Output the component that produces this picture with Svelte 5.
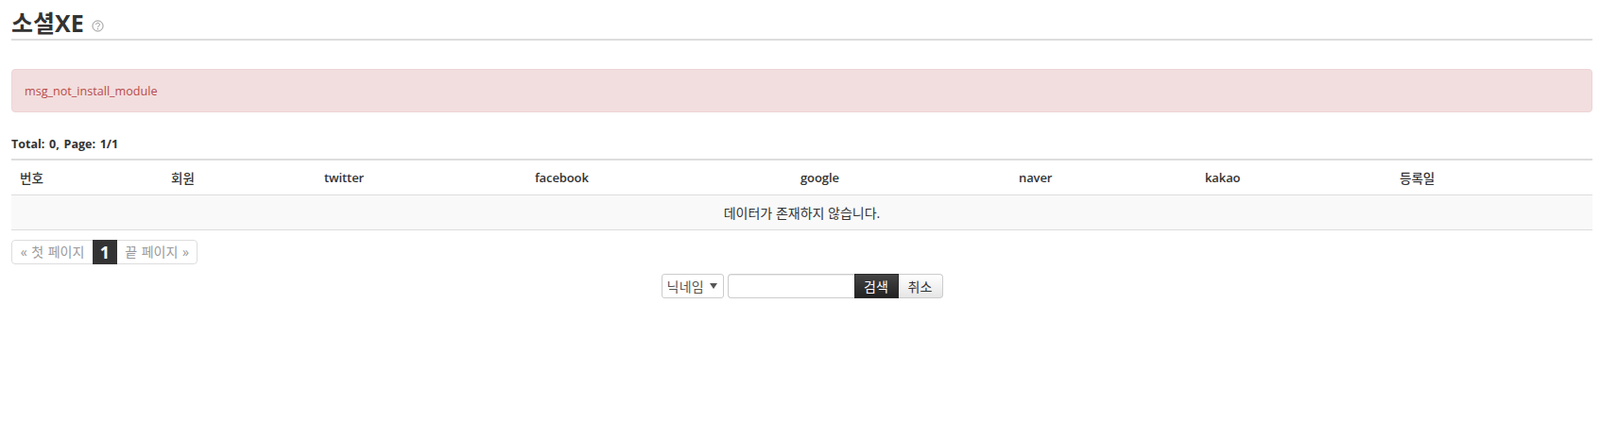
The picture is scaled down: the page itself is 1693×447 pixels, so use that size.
<script>
  const cols = ['번호', '회원', 'twitter', 'facebook', 'google', 'naver', 'kakao', '등록일'];
</script>

<div class="page">
  <h1 class="title">소셜XE <span class="help"><svg viewBox="0 0 14 14" width="13" height="13"><circle cx="7" cy="7" r="6" fill="none" stroke="#8a8a8a" stroke-width="1"/><path d="M5 5.6a2 2 0 1 1 3.1 1.6c-.7.5-1.1.8-1.1 1.6" fill="none" stroke="#8a8a8a" stroke-width="1"/><circle cx="7" cy="10.4" r=".7" fill="#8a8a8a"/></svg></span></h1>
  <div class="alert">msg_not_install_module</div>
  <div class="total"><strong>Total: 0, Page: 1/1</strong></div>
  <table>
    <thead>
      <tr>
        {#each cols as c}<th>{c}</th>{/each}
      </tr>
    </thead>
    <tbody>
      <tr><td colspan="8">데이터가 존재하지 않습니다.</td></tr>
    </tbody>
  </table>
  <div class="pager">
    <a href="#first">« 첫 페이지</a><strong>1</strong><a href="#last">끝 페이지 »</a>
  </div>
  <form class="search">
    <span class="select"><select><option>닉네임</option></select></span>
    <span class="group"><input type="text" /><button class="dark" type="button">검색</button><button class="light" type="button">취소</button></span>
  </form>
</div>

<style>
  :global(body) {
    margin: 0;
    background: #fff;
    color: #333;
    font-family: "Open Sans", "Noto Sans CJK KR", sans-serif;
    font-size: 13px;
  }
  .page { padding: 0 8px 0 12px; }
  .title {
    margin: 0;
    height: 41px;
    border-bottom: 2px solid #ddd;
    font-size: 25px;
    line-height: 48px;
    font-weight: 700;
    color: #333;
    overflow: hidden;
  }
  .help { display: inline-block; margin-left: 2px; vertical-align: 0; line-height: 0; }
  .alert {
    margin-top: 30px;
    height: 46px;
    box-sizing: border-box;
    padding: 0 13px;
    line-height: 46px;
    background: #f2dede;
    border: 1px solid #eed3d7;
    border-radius: 4px;
    color: #b94a48;
    font-size: 12.6px;
  }
  .total { margin-top: 24px; height: 25px; line-height: 20px; font-size: 12.5px; word-spacing: 1.5px; }
  table { width: 100%; border-collapse: collapse; table-layout: fixed; border-top: 2px solid #ddd; }
  th {
    box-sizing: border-box;
    height: 37px;
    padding: 0 9px;
    text-align: left;
    font-size: 13.5px;
    font-weight: 500;
    border-bottom: 1px solid #ddd;
  }
  th:nth-child(n+3):not(:last-child) { font-size: 13px; font-weight: 600; letter-spacing: -0.1px; }
  th:nth-child(1) { width: 160px; }
  th:nth-child(2) { width: 162px; }
  th:nth-child(3) { width: 223px; }
  th:nth-child(4) { width: 281px; }
  th:nth-child(5) { width: 231px; }
  th:nth-child(6) { width: 197px; }
  th:nth-child(7) { width: 206px; }
  th:nth-child(8) { width: 213px; }
  td {
    height: 36px;
    padding: 0;
    text-align: center;
    background: #f9f9f9;
    border-bottom: 1px solid #ddd;
    font-size: 14px;
    font-weight: 400;
  }
  .pager {
    margin-top: 10px;
    display: inline-flex;
    height: 26px;
    border: 1px solid #ddd;
    border-radius: 4px;
    box-sizing: border-box;
    vertical-align: top;
  }
  .pager a {
    color: #999;
    text-decoration: none;
    line-height: 24px;
    font-size: 14px;
    word-spacing: 1px;
    white-space: nowrap;
    width: 85px;
    text-align: center;
  }
  .pager a:last-child { width: 84px; }
  .pager strong {
    background: #333;
    color: #fff;
    width: 26px;
    margin: -1px 0;
    text-align: center;
    font-size: 18px;
    line-height: 26px;
  }
  .search { display: flex; justify-content: center; align-items: center; gap: 4px; margin-top: 10px; }
  .select { position: relative; display: inline-flex; }
  .select::after {
    content: "";
    position: absolute;
    right: 7px;
    top: 10px;
    border-left: 4px solid transparent;
    border-right: 4px solid transparent;
    border-top: 6px solid #555;
    pointer-events: none;
  }
  select {
    appearance: none;
    height: 26px;
    width: 66px;
    padding: 0 0 0 5px;
    font: 14px "Noto Sans CJK KR", sans-serif;
    letter-spacing: .3px;
    color: #555;
    background: #fff;
    border: 1px solid #ccc;
    border-radius: 3px;
  }
  .group { display: inline-flex; }
  input {
    width: 134px;
    height: 26px;
    box-sizing: border-box;
    border: 1px solid #ccc;
    border-right: 0;
    border-radius: 4px 0 0 4px;
    padding: 0 4px;
    box-shadow: inset 0 1px 1px rgba(0,0,0,.08);
  }
  button {
    height: 26px;
    width: 47px;
    padding: 0;
    font: 14px "Noto Sans CJK KR", sans-serif;
    border: 1px solid #ccc;
  }
  .dark { background: linear-gradient(#444, #222); color: #fff; border-color: #2a2a2a; }
  .light { background: linear-gradient(#fff, #e6e6e6); color: #333; border-left: 0; border-radius: 0 4px 4px 0; }
</style>
